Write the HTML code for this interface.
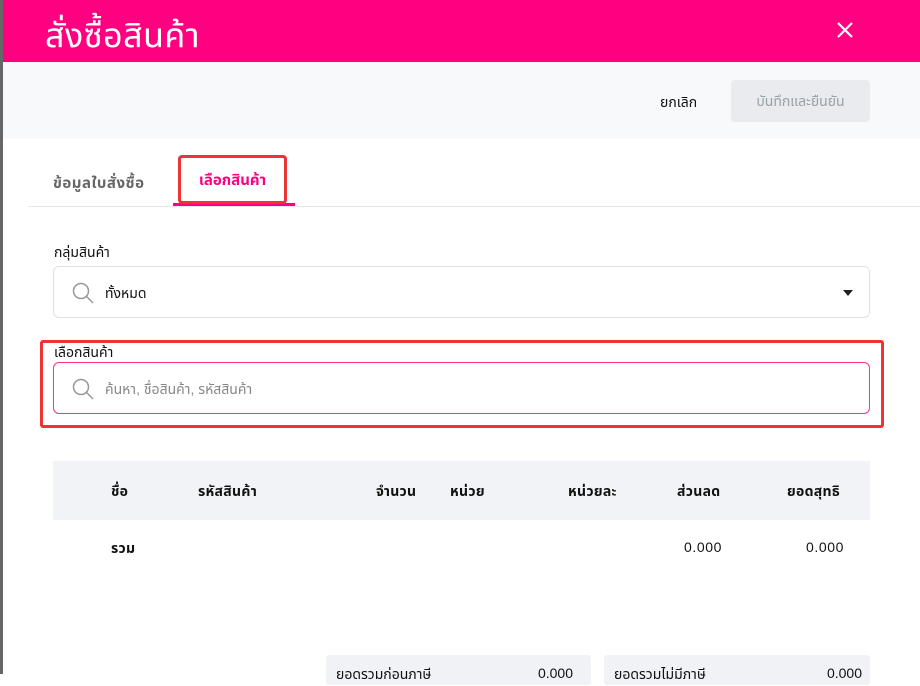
<!DOCTYPE html><html><head><meta charset="utf-8"><style>
*{box-sizing:border-box;margin:0;padding:0}
body{width:920px;height:674px;overflow:hidden;background:#fff;font-family:"Liberation Sans","Noto Sans Thai",sans-serif;position:relative;color:#111}
.edge{position:absolute;left:0;top:0;width:3px;height:674px;background:#666}
.hdr{position:absolute;left:3px;top:0;width:917px;height:62px;background:#ff0080}
.hdr h1{position:absolute;left:42px;top:12px;color:#fff;font-size:34px;font-weight:normal;letter-spacing:0.5px}
.x{position:absolute;left:832px;top:20px}
.bar{position:absolute;left:3px;top:62px;width:917px;height:77px;background:#f8f9fb}
.cancel{position:absolute;left:660px;top:93px;font-size:14px}
.save{position:absolute;left:731px;top:80px;width:139px;height:42px;background:#e9ebee;border-radius:4px;color:#9aa0a8;font-size:14px;text-align:center;line-height:42px}
.tab1{position:absolute;left:53px;top:172px;font-size:15px;color:#666;font-weight:bold;letter-spacing:0.5px}
.tab2{position:absolute;left:178px;top:155px;width:109px;height:49px;border:3px solid #e33;border-radius:4px;color:#ff0080;font-weight:bold;font-size:15px;text-align:center;line-height:46px}
.ul{position:absolute;left:173px;top:203px;width:122px;height:3px;background:#ff0080}
.line{position:absolute;left:28px;top:206px;width:892px;height:1px;background:#e3e7ee}
.lbl{position:absolute;font-size:14px}
.inp{position:absolute;left:53px;width:817px;height:52px;border:1px solid #dde0e5;border-radius:6px;font-size:14px}
.inp svg{position:absolute;left:17px;top:14px}
.inp span{position:absolute;left:51px;top:17px}
.red{position:absolute;left:40px;top:340px;width:844px;height:88px;border:3px solid #e33;border-radius:3px}
.th{position:absolute;left:53px;top:461px;width:817px;height:59px;background:#f1f3f6}
.t{position:absolute;font-size:14px;font-weight:bold;letter-spacing:0.3px}
.n{position:absolute;font-size:14px;letter-spacing:0.6px}
.sum{position:absolute;top:655px;height:30px;background:#f0f2f6;border-radius:3px;font-size:14px}
.sum span{position:absolute;top:10px}
</style></head><body>
<div class="edge"></div>
<div class="hdr"><h1>สั่งซื้อสินค้า</h1>
<svg class="x" width="20" height="20" viewBox="0 0 20 20"><path d="M3 3L17 17M17 3L3 17" stroke="#fff" stroke-width="2.2"/></svg></div>
<div class="bar"></div>
<div class="cancel">ยกเลิก</div>
<div class="save">บันทึกและยืนยัน</div>
<div class="tab1">ข้อมูลใบสั่งซื้อ</div>
<div class="line"></div>
<div class="ul"></div>
<div class="tab2">เลือกสินค้า</div>
<div class="lbl" style="left:54px;top:243px">กลุ่มสินค้า</div>
<div class="inp" style="top:266px"><svg width="24" height="24" viewBox="0 0 24 24"><circle cx="10" cy="10" r="7.5" fill="none" stroke="#999" stroke-width="1.5"/><path d="M15.5 15.5L22 22" stroke="#999" stroke-width="1.5"/></svg><span>ทั้งหมด</span>
<svg style="left:788px;top:22px" width="12" height="8" viewBox="0 0 12 8"><path d="M1 1h10L6 7z" fill="#222"/></svg></div>
<div class="red"></div>
<div class="lbl" style="left:54px;top:343px">เลือกสินค้า</div>
<div class="inp" style="top:362px;border:1.5px solid #ff2f8a"><svg width="24" height="24" viewBox="0 0 24 24"><circle cx="10" cy="10" r="7.5" fill="none" stroke="#999" stroke-width="1.5"/><path d="M15.5 15.5L22 22" stroke="#999" stroke-width="1.5"/></svg><span style="color:#888">ค้นหา, ชื่อสินค้า, รหัสสินค้า</span></div>
<div class="th"></div>
<div class="t" style="left:111px;top:482px">ชื่อ</div>
<div class="t" style="left:198px;top:482px">รหัสสินค้า</div>
<div class="t" style="left:376px;top:482px">จำนวน</div>
<div class="t" style="left:450px;top:482px">หน่วย</div>
<div class="t" style="left:568px;top:482px">หน่วยละ</div>
<div class="t" style="left:677px;top:482px">ส่วนลด</div>
<div class="t" style="left:787px;top:482px">ยอดสุทธิ</div>
<div class="t" style="left:111px;top:539px">รวม</div>
<div class="n" style="left:684px;top:539px">0.000</div>
<div class="n" style="left:806px;top:539px">0.000</div>
<div class="sum" style="left:326px;width:265px"><span style="left:10px">ยอดรวมก่อนภาษี</span><span style="right:18px">0.000</span></div>
<div class="sum" style="left:604px;width:266px"><span style="left:10px">ยอดรวมไม่มีภาษี</span><span style="right:8px">0.000</span></div>
</body></html>
